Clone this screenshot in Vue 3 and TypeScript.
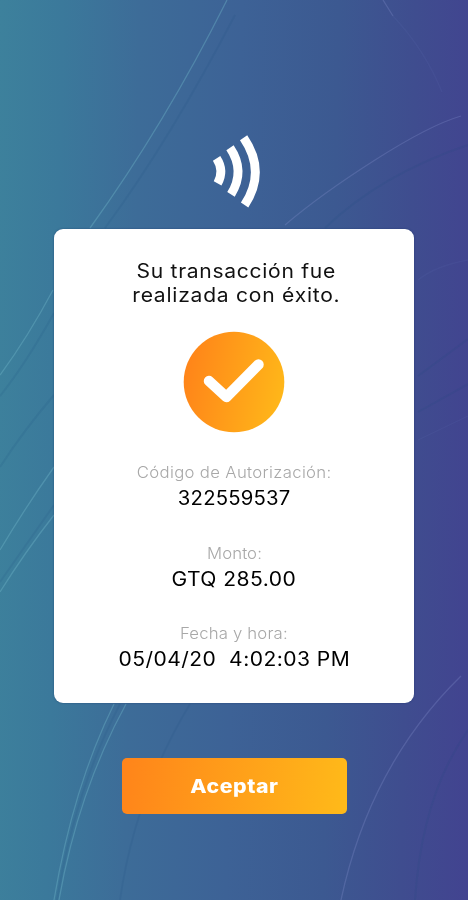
<script setup lang="ts">
interface Detail {
  id: string
  label: string
  value: string
}

const details: Detail[] = [
  { id: 'code', label: 'Código de Autorización:', value: '322559537' },
  { id: 'amount', label: 'Monto:', value: 'GTQ 285.00' },
  { id: 'date', label: 'Fecha y hora:', value: '05/04/20\u00a0 4:02:03 PM' },
]
</script>

<template>
  <main class="screen">
    <svg class="waves" viewBox="0 0 468 900" fill="none" aria-hidden="true">
      <g class="shade">
        <path d="M235 15Q170 140 105 228" />
        <path d="M54 313Q25 365 0 396M54 395Q24 430 0 467M54 505L0 582" />
        <path d="M468 145Q380 175 325 228M468 339L418 376M468 384L418 412" />
        <path d="M190 704Q135 795 120 900M468 730Q422 795 415 900" />
        <path d="M120 704Q75 790 57 900" />
      </g>
      <g class="light">
        <path d="M227 0Q165 124 90 228M53 290Q28 337 0 375" />
        <path d="M54 467Q25 508 0 550M54 515Q25 552 0 592" />
        <path d="M114 704Q73 787 54 900M126 704Q78 792 59 900" />
        <path class="soft" d="M461 116Q430 125 375 160T285 225" />
        <path class="soft" d="M461 676Q370 765 341 900M383 0L393 16" />
        <path class="faint" d="M393 16Q425 50 442 92M468 260Q435 266 418 280M468 416L418 440" />
      </g>
    </svg>

    <svg class="signal" viewBox="0 0 50 76" fill="none" aria-hidden="true">
      <path d="M5.6 24.4Q13.6 36.8 6.6 49.4" />
      <path d="M19 13.8Q34.6 37 20 60.4" />
      <path d="M32.6 3.8Q55.6 37.4 33.6 71" />
    </svg>

    <section class="card">
      <h1 class="title">
        <span class="line first">Su transacción fue</span>
        <span class="line second">realizada con éxito.</span>
      </h1>
      <svg class="check" viewBox="0 0 102 102" fill="none" aria-hidden="true">
        <defs>
          <linearGradient id="orange" x1="0" x2="1" y1="0.4" y2="0.6">
            <stop stop-color="#ff8419" />
            <stop offset="1" stop-color="#ffb719" />
          </linearGradient>
        </defs>
        <circle cx="51" cy="51" r="50.3" fill="url(#orange)" />
        <path d="M26 50L43.4 66L75.5 33.5" />
      </svg>
      <dl class="details">
        <div v-for="d in details" :key="d.id" class="detail" :class="d.id">
          <dt><span>{{ d.label }}</span></dt>
          <dd><span>{{ d.value }}</span></dd>
        </div>
      </dl>
    </section>

    <button class="accept" type="button"><span>Aceptar</span></button>
  </main>
</template>

<style>
body {
  margin: 0;
}
</style>

<style scoped>
.screen {
  position: relative;
  box-sizing: border-box;
  width: 468px;
  height: 900px;
  padding-top: 134px;
  overflow: hidden;
  display: flex;
  flex-direction: column;
  align-items: center;
  font-family: Inter, "Liberation Sans", sans-serif;
  background: linear-gradient(91deg, #3d819c 0%, #3b799b 13%, #3d6c98 29%, #3d6296 50%, #3c5991 70%, #3f4d8f 86%, #424390 100%);
}

.waves {
  position: absolute;
  inset: 0;
  width: 468px;
  height: 900px;
}

.light {
  stroke: #6fb4c7;
  stroke-width: 1.3;
  opacity: 0.4;
}

.soft {
  stroke: #8490cc;
  opacity: 0.75;
}

.faint {
  stroke: #7180c2;
  opacity: 0.25;
}

.shade {
  stroke: #1c4a7c;
  stroke-width: 2;
  opacity: 0.12;
}

.signal {
  position: relative;
  width: 50px;
  height: 76px;
  margin-left: 4px;
  stroke: #fff;
  stroke-width: 8.8;
  flex: none;
}

.card {
  position: relative;
  box-sizing: border-box;
  width: 360px;
  height: 474px;
  margin-top: 19px;
  padding-top: 30px;
  border-radius: 9px;
  background: #fff;
  box-shadow: 0 0 2px rgba(20, 50, 100, 0.6);
  display: flex;
  flex-direction: column;
  align-items: center;
}

.title {
  margin: 0 0 0 4px;
  display: flex;
  flex-direction: column;
  align-items: center;
  font-size: 19.5px;
  font-weight: 400;
  line-height: 24px;
  color: #111;
}

.line,
dt span,
dd span,
.accept span {
  display: inline-block;
  white-space: nowrap;
  transform: scaleX(1.08);
}

.first {
  letter-spacing: 0.65px;
}

.second {
  letter-spacing: 0.7px;
}

.check {
  width: 102px;
  height: 102px;
  margin-top: 24px;
  flex: none;
}

.check path {
  stroke: #fff;
  stroke-width: 10.5;
  stroke-linecap: round;
  stroke-linejoin: round;
}

.details {
  margin: 28px 0 0;
  display: flex;
  flex-direction: column;
  gap: 30px;
  text-align: center;
  white-space: nowrap;
}

.detail {
  height: 51px;
}

.date {
  margin-top: -1px;
}

dt {
  font-size: 15.5px;
  font-weight: 300;
  line-height: 24px;
  letter-spacing: 0.3px;
  color: #a8a8a8;
}

dd {
  margin: 0;
  font-size: 19.5px;
  font-weight: 400;
  line-height: 27px;
  letter-spacing: 0.42px;
  color: #000;
}

.amount dt {
  letter-spacing: 0.1px;
}

.date dt {
  letter-spacing: 0.15px;
}

.code dd {
  letter-spacing: 0.2px;
}

.code dd span {
  transform: scaleX(1.04);
}

.accept {
  position: relative;
  width: 225px;
  height: 56px;
  margin-top: 55px;
  padding: 1px 0 0 1px;
  border: 0;
  border-radius: 5px;
  background: linear-gradient(98deg, #ff841a, #ffba19);
  color: #fff;
  font: 800 19px/55px Inter, "Liberation Sans", sans-serif;
  letter-spacing: 0.5px;
}

.accept span {
  transform: scaleX(1.12);
}
</style>
